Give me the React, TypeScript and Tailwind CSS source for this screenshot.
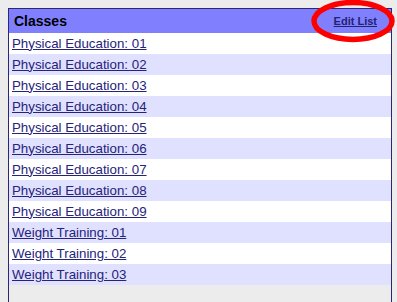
import React from "react";

const rows = [
  "Physical Education: 01",
  "Physical Education: 02",
  "Physical Education: 03",
  "Physical Education: 04",
  "Physical Education: 05",
  "Physical Education: 06",
  "Physical Education: 07",
  "Physical Education: 08",
  "Physical Education: 09",
  "Weight Training: 01",
  "Weight Training: 02",
  "Weight Training: 03",
];

export default function App() {
  return (
    <div
      className="relative w-[397px] h-[302px] overflow-hidden bg-[#ececec] pt-[8px] pl-[8px]"
      style={{ fontFamily: '"Liberation Sans", Arial, sans-serif' }}
    >
      <div className="w-[384px] h-[320px] border border-b-0 border-[#2b2870] bg-[#ececec] flex flex-col">
        <div className="h-[24px] bg-[#8080ff] flex items-center justify-between pl-[5px] pr-[14px]">
          <span className="text-[14px] font-bold text-black">Classes</span>
          <a href="#" className="text-[11px] font-bold text-[#22226e] underline">
            Edit List
          </a>
        </div>
        {rows.map((r, i) => (
          <div
            key={r}
            className={`h-[21px] flex items-center pl-[3px] ${i % 2 === 0 ? "bg-white" : "bg-[#e0e0ff]"}`}
          >
            <a href="#" className="text-[13.3px] text-[#25237a] underline leading-none">
              {r}
            </a>
          </div>
        ))}
      </div>
      <svg
        className="absolute left-[311px] top-0 pointer-events-none"
        width="86"
        height="44"
        viewBox="0 0 86 44"
      >
        <ellipse cx="42" cy="21" rx="39" ry="18.5" fill="none" stroke="#ff0000" strokeWidth="5.5" />
      </svg>
    </div>
  );
}
